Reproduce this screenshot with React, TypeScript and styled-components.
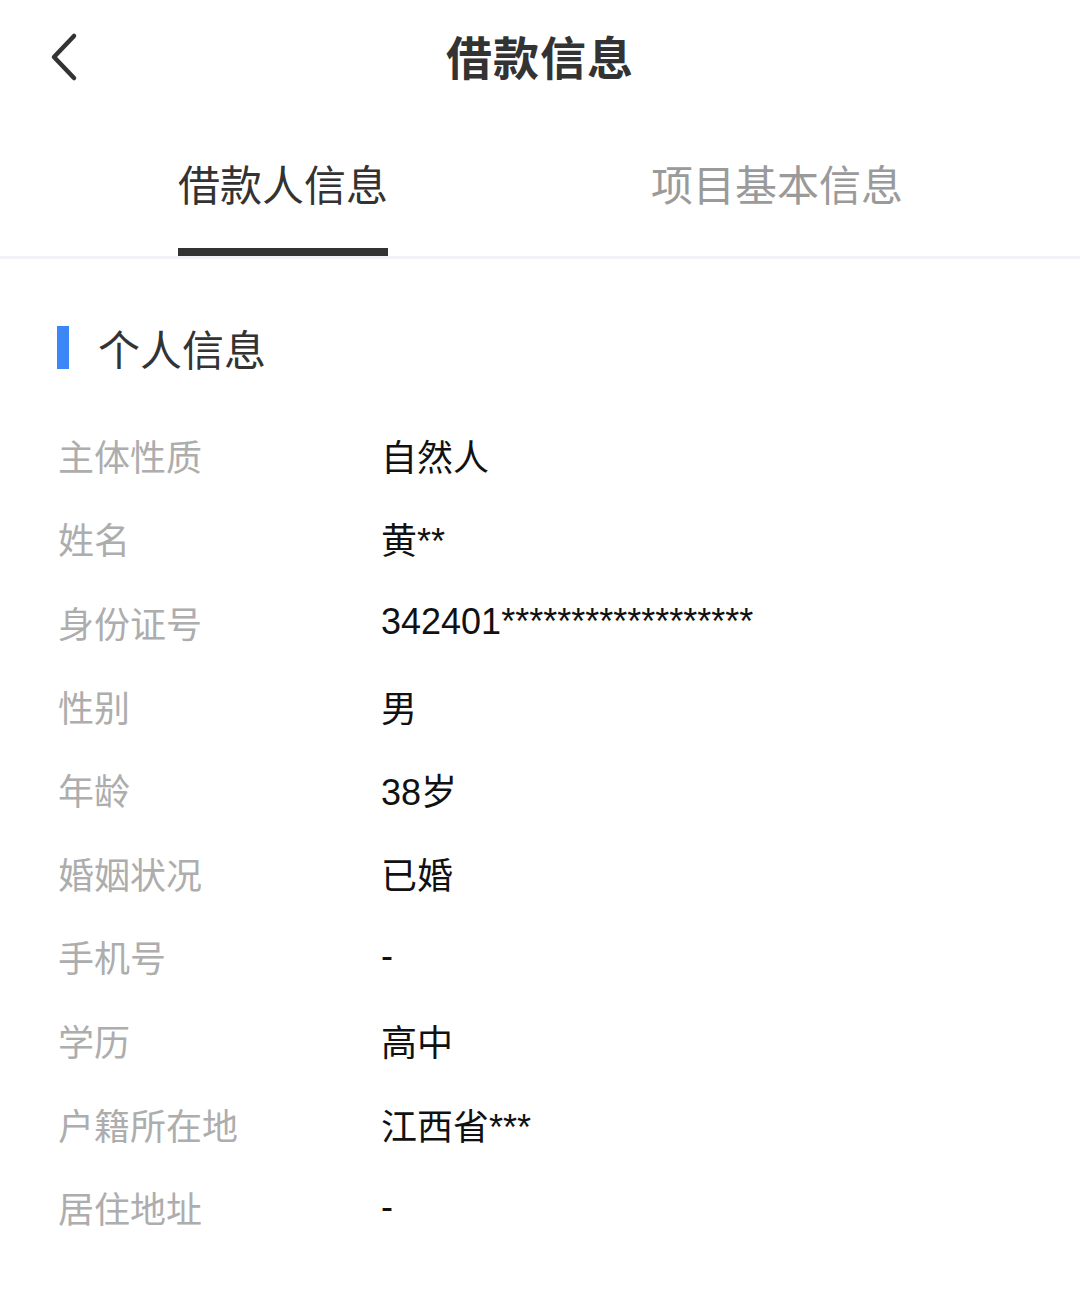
import styled, { createGlobalStyle } from "styled-components";

const GlobalStyle = createGlobalStyle`
    body {
        margin: 0;
        background: #ffffff;
        font-family: "Liberation Sans", "Noto Sans CJK SC", sans-serif;
    }
`;

const StyledPage = styled.div`
    width: 1080px;
    min-height: 1303px;
    background: #ffffff;
`;

const StyledHeader = styled.div`
    position: relative;
    height: 112px;
    display: flex;
    align-items: center;
    justify-content: center;
`;
const StyledBack = styled.div`
    position: absolute;
    left: 40px;
    top: 31px;
    width: 48px;
    height: 52px;
    svg{
        display: block;
    }
`;
const StyledHeaderTitle = styled.h1`
    margin: 0 0 2px;
    font-size: 46px;
    font-weight: 700;
    color: #333333;
    letter-spacing: 1px;
`;

const StyledTabs = styled.div`
    display: flex;
    padding-left: 178px;
    gap: 263px;
    height: 144px;
    border-bottom: 3px solid #f3f2fb;
`;
const StyledTab = styled.div<{ $active?: boolean }>`
    display: flex;
    flex-direction: column;
    align-items: center;
    justify-content: flex-end;
    font-size: 42px;
    line-height: 60px;
    color: ${(p) => (p.$active ? "#333333" : "#9a9a9a")};
    &::after{
        content: "";
        display: block;
        width: 100%;
        height: 8px;
        margin-top: 31px;
        background: ${(p) => (p.$active ? "#333333" : "transparent")};
    }
`;

const StyledSection = styled.div`
    padding: 67px 0 0 57px;
`;
const StyledSectionTitle = styled.h2`
    display: flex;
    align-items: center;
    gap: 29px;
    margin: 0 0 44px;
    font-size: 42px;
    font-weight: 400;
    color: #333333;
    height: 43px;
    &::before{
        content: "";
        width: 12px;
        height: 43px;
        background: #3d86f6;
    }
`;

const StyledList = styled.div`
    display: flex;
    flex-direction: column;
`;
const StyledRow = styled.div`
    display: grid;
    grid-template-columns: 324px 1fr;
    align-items: center;
    height: 83.6px;
    font-size: 36px;
`;
const StyledLabel = styled.span`
    color: #adadad;
    padding-left: 1px;
`;
const StyledValue = styled.span`
    color: #111111;
`;

const rows: [string, string][] = [
    ["主体性质", "自然人"],
    ["姓名", "黄**"],
    ["身份证号", "342401******************"],
    ["性别", "男"],
    ["年龄", "38岁"],
    ["婚姻状况", "已婚"],
    ["手机号", "-"],
    ["学历", "高中"],
    ["户籍所在地", "江西省***"],
    ["居住地址", "-"],
];

const App = () => {
    return (
        <StyledPage>
            <GlobalStyle />
            <StyledHeader>
                <StyledBack>
                    <svg width="48" height="52" viewBox="0 0 48 52">
                        <polyline points="34,5 14,26 34,47" fill="none" stroke="#333333" strokeWidth="4.5" strokeLinecap="round" strokeLinejoin="round" />
                    </svg>
                </StyledBack>
                <StyledHeaderTitle>借款信息</StyledHeaderTitle>
            </StyledHeader>
            <StyledTabs>
                <StyledTab $active>借款人信息</StyledTab>
                <StyledTab>项目基本信息</StyledTab>
            </StyledTabs>
            <StyledSection>
                <StyledSectionTitle>个人信息</StyledSectionTitle>
                <StyledList>
                    {rows.map(([label, value]) => (
                        <StyledRow key={label}>
                            <StyledLabel>{label}</StyledLabel>
                            <StyledValue>{value}</StyledValue>
                        </StyledRow>
                    ))}
                </StyledList>
            </StyledSection>
        </StyledPage>
    );
}

export default App;
